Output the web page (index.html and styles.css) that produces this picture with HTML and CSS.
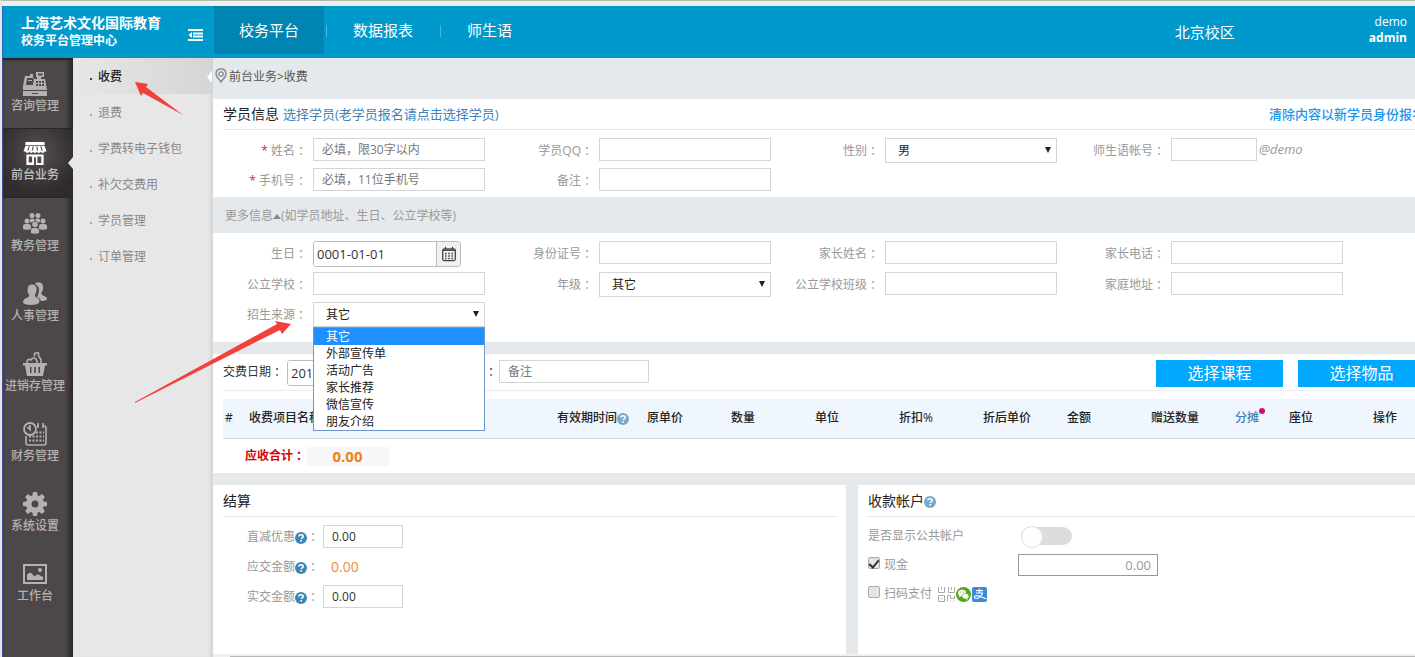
FILE: index.html
```html
<!DOCTYPE html>
<html lang="zh-CN">
<head>
<meta charset="utf-8">
<title>校务平台管理中心</title>
<link rel="stylesheet" href="styles.css">
</head>
<body>
<svg class="defs" aria-hidden="true">
  <symbol id="help" viewBox="0 0 12 12"><circle cx="6" cy="6" r="6" fill="currentColor"/><path d="M3.9 4.6C3.9 3.3 4.8 2.7 6 2.7s2.2.7 2.2 1.8c0 1.3-1.9 1.4-1.9 2.6" fill="none" stroke="#fff" stroke-width="1.6"/><rect x="5.3" y="8" width="1.7" height="1.6" fill="#fff"/></symbol>
  <symbol id="calendar" viewBox="0 0 16 16"><rect x="1.7" y="3" width="12.6" height="11.6" rx="1.5" fill="none" stroke="#444" stroke-width="1.3"/><path d="M2 4.500h12M4.500.8v3M11.500.8v3" stroke="#444" stroke-width="1.2"/><path d="M4 7.500h8M4 10h8M4 12.500h8" stroke="#444" stroke-width="1.4" stroke-dasharray="1.600 1.600"/></symbol>
</svg>
<div class="app">
  <header class="topbar">
    <div class="brand">
      <div class="brand-text"><h1>上海艺术文化国际教育</h1><p>校务平台管理中心</p></div>
      <button class="collapse" type="button" aria-label="收起菜单"><svg viewBox="0 0 15 12"><path d="M0 1h15M5 4.400h10M5 7.600h10M0 11h15" stroke="#fff" stroke-width="2"/><path d="M4 3v6L.5 6z" fill="#fff"/></svg></button>
    </div>
    <nav class="tabs">
      <a class="tab active" href="#">校务平台</a><a class="tab" href="#">数据报表</a><a class="tab" href="#">师生语</a>
    </nav>
    <a class="campus" href="#">北京校区</a>
    <div class="user"><span>demo</span><strong>admin</strong></div>
  </header>
  <div class="body">
    <nav class="sidebar">
      <a href="#"><svg viewBox="0 0 24 24"><path fill="currentColor" fill-rule="evenodd" d="M13 0h8v5h-3v2h4l2 11H0V14L2 4h5V2h3v5h4V5h-1zM15 1.500v2h4.500v-2zM4 6 3 13h7l1-7zM13 9v2h2V9zm3 0v2h2V9zm3 0v2h2V9zm-6 3v2h2v-2zm3 0v2h2v-2zm3 0v2h2v-2zM5 8h4v1H5zM0 19h24v5H0zm9 2v1h6v-1z"/></svg>咨询管理</a>
      <a class="active" href="#"><svg viewBox="0 0 24 24"><path fill="currentColor" fill-rule="evenodd" d="M2 0h20v3H2zM2 4h20l2 6h-2c-1 2-3 2-4 0-1 2-3 2-4 0-1 2-3 2-4 0-1 2-3 2-4 0-1 2-3 2-4 0H0zM3 13h18v11h-8v-8H11v8H3zm2.500 2v6.500H9V15zM14.500 15v7H18.500v-7z"/><path d="M6 4.500 4.500 9M10 4.500 9.500 9M14 4.500l.5 4.500M18 4.500 19.500 9" stroke="#353232"/></svg>前台业务</a>
      <a href="#"><svg viewBox="0 0 24 24" fill="currentColor"><circle cx="9" cy="3.500" r="2.500"/><circle cx="15" cy="3.500" r="2.500"/><circle cx="4" cy="9" r="2.500"/><circle cx="20" cy="9" r="2.500"/><circle cx="12" cy="12.500" r="2.800"/><path d="M7 10V8c0-2 4-2 4.500-.5V9L9 10.500zM17 10V8c0-2-4-2-4.500-.5V9l2.500 1.500zM0 17v-2.500C0 12 2 12 4 12s4 0 4 2.500V17c-2 1-6 1-8 0zM16 17v-2.500c0-2.500 2-2.500 4-2.500s4 0 4 2.500V17c-2 1-6 1-8 0zM8 21v-2.500C8 16 10 16 12 16s4 0 4 2.500V21c-2 1-6 1-8 0z"/></svg>教务管理</a>
      <a href="#"><svg viewBox="0 0 24 24" fill="currentColor"><path d="M9 2.500c3.500 0 5 2.500 4.500 6-.2 2-1 3-1.500 4-.3 2 .5 2.500 2.500 3.500 2 1 2.500 2.500 1.500 5C13 23.500 3 23.500 0 21c0-3 1-4 3.500-5s3-1.500 2.500-3.500c-1-1-1.500-2.500-1.500-4.500 0-3.500 1.500-5.500 4.500-5.500z"/><path d="M12 2c1-1.500 3-2 4.500-1.500C20 1 20.500 4 20 7c-.3 2-1 2.500-1.500 3.500s0 2.500 2.500 3.500c2.500.8 3 2 3 3.500-1 1.500-4 1.500-6 1.500-.5-2-2-3-4-4 1-2 2-4 2-7.500 0-2.500-1.500-4-4-5.500z"/></svg>人事管理</a>
      <a href="#"><svg viewBox="0 0 24 24"><path fill="none" stroke="currentColor" stroke-width="1.600" d="M11.500 1h4v3l2.500 3.500V12M11.500 1v3.500M4 12V9c1-2 3-2 4-1 1.500-3 5-2.500 6 1v3"/><path fill="currentColor" fill-rule="evenodd" d="M0 11h24v2.500h-2L20 24H4L2 13.500H0zM7 15v6h1.500v-6zm4.200 0v6h1.600v-6zm4.300 0v6H17v-6z"/></svg>进销存管理</a>
      <a href="#"><svg viewBox="0 0 24 24" fill="none" stroke="currentColor"><circle cx="7" cy="7" r="6" stroke-width="1.800"/><path stroke-width="1.600" d="M7 3v4.500L4.500 5M3 14v7c0 1.500.5 2 2 2h16c1.500 0 2-.5 2-2V6c0-1.500-.5-2-2-2h-1M14 4h2M15 1v5M20 1v5"/><path stroke-width="2" stroke-dasharray="2 1.500" d="M13 10.500h8M6 14.500h15M6 18.500h15"/></svg>财务管理</a>
      <a href="#"><svg viewBox="0 0 24 24"><g fill="currentColor"><path fill-rule="evenodd" d="M12 3a9 9 0 1 0 0 18 9 9 0 0 0 0-18zm0 5.500a3.500 3.500 0 1 1 0 7 3.500 3.500 0 0 1 0-7z"/><g id="cog"><path d="M10 0h4l.8 5H9.200zM10 24h4l.8-5H9.200zM0 10v4l5 .8V9.200zM24 10v4l-5 .8V9.200z"/></g><use href="#cog" transform="rotate(45 12 12)"/></g></svg>系统设置</a>
      <a href="#"><svg viewBox="0 0 24 24"><path fill="none" stroke="currentColor" stroke-width="2" d="M1 3h22v18H1z"/><path fill="currentColor" d="M4 18v-5c2-3 4-3 6 0l1.500 1.500c2-2 4-3 5.500-1 1 1 2 1 3 1V18z"/><circle cx="17" cy="8" r="2" fill="currentColor"/></svg>工作台</a>
    </nav>
    <nav class="subnav">
      <a class="active" href="#">收费</a><a href="#">退费</a><a href="#">学费转电子钱包</a><a href="#">补欠交费用</a><a href="#">学员管理</a><a href="#">订单管理</a>
    </nav>
    <main class="main">
      <div class="content">
        <div class="crumb"><svg viewBox="0 0 12 15"><path d="M6 1C3 1 1 3 1 6c0 3 3 5 5 8 2-3 5-5 5-8 0-3-2-5-5-5z" fill="none" stroke="#888b8e" stroke-width="1.500"/><circle cx="6" cy="6" r="2.200" fill="none" stroke="#888b8e" stroke-width="1.300"/></svg><span>前台业务&gt;收费</span></div>

        <section class="card">
          <div class="card-head"><h2>学员信息</h2><a class="pick" href="#">选择学员(老学员报名请点击选择学员)</a><a class="reset" href="#">清除内容以新学员身份报名</a></div>
          <div class="fields">
            <div class="field"><label for="name"><i>*</i> 姓名<span class="colon">：</span></label><input id="name" type="text" placeholder="必填，限30字以内"></div>
            <div class="field"><label for="qq">学员QQ<span class="colon">：</span></label><input id="qq" type="text"></div>
            <div class="field"><label for="sex">性别<span class="colon">：</span></label><div class="select"><select id="sex"><option>男</option><option>女</option></select></div></div>
            <div class="field"><label for="account">师生语帐号<span class="colon">：</span></label><input class="short" id="account" type="text"><em>@demo</em></div>
            <div class="field"><label for="phone"><i>*</i> 手机号<span class="colon">：</span></label><input id="phone" type="text" placeholder="必填，11位手机号"></div>
            <div class="field"><label for="note">备注<span class="colon">：</span></label><input id="note" type="text"></div>
          </div>
        </section>

        <div class="more">更多信息<span class="up"></span>(如学员地址、生日、公立学校等)</div>

        <section class="card extra">
          <div class="fields">
            <div class="field"><label for="birth">生日<span class="colon">：</span></label><div class="date"><input id="birth" type="text" value="0001-01-01"><button type="button" aria-label="选择日期"><svg><use href="#calendar"/></svg></button></div></div>
            <div class="field"><label for="idno">身份证号<span class="colon">：</span></label><input id="idno" type="text"></div>
            <div class="field"><label for="parent">家长姓名<span class="colon">：</span></label><input id="parent" type="text"></div>
            <div class="field"><label for="ptel">家长电话<span class="colon">：</span></label><input id="ptel" type="text"></div>
            <div class="field"><label for="school">公立学校<span class="colon">：</span></label><input id="school" type="text"></div>
            <div class="field"><label for="grade">年级<span class="colon">：</span></label><div class="select"><select id="grade"><option>其它</option></select></div></div>
            <div class="field"><label for="class">公立学校班级<span class="colon">：</span></label><input id="class" type="text"></div>
            <div class="field"><label for="addr">家庭地址<span class="colon">：</span></label><input id="addr" type="text"></div>
            <div class="field"><label for="source">招生来源<span class="colon">：</span></label><div class="select"><select id="source"><option>其它</option></select>
              <ul class="options"><li class="chosen">其它</li><li>外部宣传单</li><li>活动广告</li><li>家长推荐</li><li>微信宣传</li><li>朋友介绍</li></ul></div></div>
          </div>
        </section>

        <section class="card orders">
          <div class="paybar">
            <label for="paydate">交费日期<span class="colon">：</span></label><div class="date pay"><input id="paydate" type="text" value="2017-09-01"><button type="button" aria-label="选择交费日期"><svg><use href="#calendar"/></svg></button></div>
            <label for="paynote">备注<span class="colon">：</span></label><input class="paynote" id="paynote" type="text" placeholder="备注">
            <div class="actions"><button type="button">选择课程</button><button type="button">选择物品</button></div>
          </div>
          <table>
            <colgroup><col class="c-no"><col><col class="c-time"><col class="c-std"><col class="c-std"><col class="c-std"><col class="c-std"><col class="c-std"><col class="c-std"><col class="c-std"><col class="c-sm"><col class="c-std"><col class="c-sm"></colgroup>
            <thead><tr><th>#</th><th>收费项目名称</th><th>有效期时间<svg class="help pale"><use href="#help"/></svg></th><th>原单价</th><th>数量</th><th>单位</th><th>折扣%</th><th>折后单价</th><th>金额</th><th>赠送数量</th><th><a class="share" href="#">分摊</a></th><th>座位</th><th>操作</th></tr></thead>
          </table>
          <div class="total"><span>应收合计<span class="colon">：</span></span><output>0.00</output></div>
        </section>

        <div class="panels">
          <section class="panel settle">
            <div class="panel-head"><h2>结算</h2></div>
            <div class="line"><label for="cut">直减优惠<svg class="help"><use href="#help"/></svg><span class="colon">：</span></label><input id="cut" type="text" value="0.00"></div>
            <div class="line"><span class="label">应交金额<svg class="help"><use href="#help"/></svg><span class="colon">：</span></span><output>0.00</output></div>
            <div class="line"><label for="paid">实交金额<svg class="help"><use href="#help"/></svg><span class="colon">：</span></label><input id="paid" type="text" value="0.00"></div>
          </section>
          <section class="panel accounts">
            <div class="panel-head"><h2>收款帐户</h2><svg class="help pale"><use href="#help"/></svg></div>
            <div class="line"><label class="wide" for="public">是否显示公共帐户</label><input class="switch" id="public" type="checkbox" role="switch"></div>
            <div class="line"><div class="wide check"><input id="cash" type="checkbox" checked><label for="cash">现金</label></div><input class="amount" type="text" value="0.00" aria-label="现金金额"></div>
            <div class="line"><div class="check"><input id="scan" type="checkbox"><label for="scan">扫码支付</label></div>
              <div class="brands">
                <svg viewBox="0 0 17 15" class="qr"><path fill="none" stroke="#aaa" d="M.5 0v5.500h6V0M3.500 0v3M10.500 0v5.500h6V0M13.500 0v3M.5 14.500v-6h6v6zM3 11.500h1.500M9.500 14.500v-6h3v3h4v-3M12.500 14.500v-1M15.500 14.500v-1"/></svg>
                <svg viewBox="0 0 15 15"><circle cx="7.500" cy="7.500" r="7.500" fill="#51a80e"/><ellipse cx="6" cy="6" rx="4" ry="3.300" fill="#fff"/><path d="M3.500 8 3 10.500l2.500-1.500z" fill="#fff"/><ellipse cx="9.500" cy="9.200" rx="3.500" ry="2.800" fill="#fff" stroke="#51a80e" stroke-width=".6"/><path d="m11 11 1 2-2.500-1.300z" fill="#fff"/><circle cx="4.700" cy="5" r=".6" fill="#51a80e"/><circle cx="7.300" cy="5" r=".6" fill="#51a80e"/></svg>
                <svg viewBox="0 0 15 15"><rect width="15" height="15" rx="2" fill="#3a8bd8"/><path d="M4 3.700h7M7.500 1.800v4M4 6h6.500C10 8.500 7 11.500 4.500 11.500S1.500 9.500 3.500 8.800c2.500-.8 5 1.200 11 3.200" fill="none" stroke="#fff" stroke-width="1.200"/></svg>
              </div></div>
          </section>
        </div>
      </div>
      <div class="hscroll"><div></div></div>
    </main>
  </div>
  <svg class="notes" viewBox="0 0 320 420" aria-hidden="true"><path fill="#f2413b" d="M135 82l13 2-2 3 37 28-40-22-2 3zM291 324l-9 10-2-4-145 73v-1l142-78-2-3z"/></svg>
</div>
</body>
</html>
```
FILE: styles.css
```css
* { box-sizing: border-box; }
body { margin: 0; font: 12px/18px "Open Sans", "Noto Sans CJK SC", sans-serif; color: #333; background: #f0eff0; }
h1, h2, p, ul { margin: 0; padding: 0; }
h2 { font-size: 14px; font-weight: 400; color: #222; }
a { text-decoration: none; color: #4183b8; }
i, em { font-weight: 400; }
button, input, select { font: inherit; color: inherit; margin: 0; }
svg { display: block; }
.defs { position: absolute; width: 0; height: 0; }
.colon { padding-left: 3px; margin-right: -3px; }

.app { position: relative; display: flex; flex-direction: column; min-height: 100vh; border-top: 1px solid #b3bab3; border-left: 2px solid #e3e8e3; padding-top: 5px; overflow: hidden; }

.topbar { display: flex; height: 52px; flex: none; background: #09c; color: #fff; border-left: 1px solid #1c6dc0; }
.brand { display: flex; width: 211px; align-items: center; justify-content: space-between; padding: 0 11px 0 18px; }
.brand-text { line-height: 18px; }
.brand h1 { font-size: 14px; line-height: 18px; }
.brand p { font-weight: 700; }
.collapse { border: 0; padding: 6px 0 0; background: none; }
.collapse svg { width: 15px; height: 12px; }
.tabs { display: flex; flex: 1; gap: 4px; }
.tab { position: relative; height: 48px; padding: 0 25px; font-size: 15px; line-height: 49px; color: #fff; }
.tab.active { background: #0085b2; }
.tab + .tab::before { content: ""; position: absolute; left: -2px; top: 19px; width: 1px; height: 12px; background: #4db8dc; }
.campus { padding: 0 134px 0 0; font-size: 15px; line-height: 52px; color: #fff; }
.user { display: flex; flex-direction: column; padding: 8px 8px 0 0; font-size: 12px; line-height: 16px; text-align: right; }

.body { display: flex; flex: 1; border-left: 1px solid #4a4c9c; }
.sidebar { width: 70px; flex: none; background: linear-gradient(90deg, #4c4748 62px, #2d2a2b 70px); box-shadow: inset 0 2px 2px #222; }
.sidebar a { position: relative; display: flex; flex-direction: column; align-items: center; gap: 3px; padding: 14px 6px 15px 0; height: 70px; font-weight: 500; line-height: 14px; color: #b4b1b1; white-space: nowrap; }
.sidebar svg { width: 24px; height: 24px; }
.sidebar .active { background: radial-gradient(circle at 50% 35%, #555051, #2f2b2c 75%); border-top: 1px solid #292627; border-bottom: 1px solid #292627; padding-top: 13px; color: #c4c2c2; }
.sidebar .active svg { color: #fff; }
.sidebar .active::after, .subnav .active::after { content: ""; position: absolute; right: 0; top: 28px; border: 6px solid transparent; border-left: 0; border-right: 5px solid #e8e7e8; }
.subnav { width: 140px; flex: none; background: #e8e7e8; border-right: 1px solid #d3d5d7; box-shadow: inset -4px 0 4px -3px #cfcfcf; }
.subnav a { position: relative; display: block; padding: 2px 0 0 25px; line-height: 34px; color: #888; }
.subnav a::before { content: ""; position: absolute; left: 17px; top: 20px; width: 2px; height: 2px; background: #aaa; }
.subnav .active { color: #222; font-weight: 500; background: linear-gradient(90deg, #e8e7e8, #d5d5d6); }
.subnav .active::before { background: #444; }
.subnav .active::after { top: 13px; border-right-color: #fff; }

.main { display: flex; flex: 1; flex-direction: column; min-width: 0; background: #e5e9ec; overflow: hidden; }
.content { display: flex; flex: 1; flex-direction: column; min-width: 1222px; }
.crumb { display: flex; height: 41px; gap: 2px; padding: 10px 0 0 2px; color: #555; }
.crumb svg { width: 12px; height: 15px; }

.card { background: #fff; padding: 0 10px; }
.card-head { display: flex; align-items: center; gap: 4px; height: 31px; border-bottom: 1px solid #e8e8e8; }
.pick, .reset { font-size: 13px; }
.reset { margin-left: auto; font-weight: 500; color: #1b96ea; }
.fields { display: grid; grid-template-columns: repeat(4, 286px); gap: 5px 0; padding: 8px 0 4px; }
.field { display: flex; align-items: flex-start; color: #999; }
.field > label { width: 84px; margin-right: 6px; text-align: right; line-height: 25px; white-space: nowrap; }
.field i { color: #e0203a; font-style: normal; }
.field em { font-size: 13px; line-height: 23px; padding-left: 2px; }
input[type="text"] { width: 172px; height: 23px; padding: 0 12px 0 8px; border: 1px solid #d5d5d5; border-radius: 0; background: #fff; color: #333; outline: 0; }
.field input[type="text"]::placeholder, .paynote::placeholder { color: #777; opacity: 1; }
.field input.short { width: 86px; }
.select { position: relative; width: 172px; }
.select select { display: block; width: 100%; height: 25px; padding: 1px 12px 0; border: 1px solid #d5d5d5; border-radius: 0; background: #fff; color: #222; appearance: none; }
.select::after { content: ""; position: absolute; right: 6px; top: 9px; border: 3px solid transparent; border-top: 6px solid #222; border-bottom: 0; }
.date { display: flex; width: 148px; height: 26px; border: 1px solid #bbb; border-radius: 3px; background: #fff; overflow: hidden; }
.date input[type="text"] { flex: 1; min-width: 0; height: 24px; padding: 0 3px; border: 0; font-size: 13px; }
.date button { display: flex; width: 24px; align-items: center; justify-content: center; padding: 0; border: 0; border-left: 1px solid #bbb; background: #f1f1f1; }
.date svg { width: 16px; height: 16px; }
.options { position: absolute; z-index: 2; left: 0; right: 0; top: 25px; border: 1px solid #6f95cb; background: #fff; color: #222; list-style: none; }
.options li { padding-left: 12px; line-height: 17px; }
.options .chosen { background: #1e90ff; color: #fff; }

.more { height: 36px; padding-left: 12px; line-height: 37px; color: #999; }
.up { display: inline-block; border: 4px solid transparent; border-top: 0; border-bottom: 5px solid #888; margin-bottom: 1px; }
.extra { padding-bottom: 11px; margin-bottom: 12px; }

.orders { height: 119px; }
.paybar { display: flex; align-items: flex-start; height: 37px; padding-top: 6px; border-bottom: 1px solid #ececec; line-height: 24px; }
.paybar label { width: 64px; white-space: nowrap; }
.date.pay { width: 148px; margin-right: 26px; }
.paybar .date + label { width: 38px; }
.paybar .paynote { width: 150px; }
.actions { display: flex; gap: 15px; margin-left: auto; }
.actions button { width: 127px; height: 27px; padding: 0; border: 0; background: #00a8ff; color: #fff; font-size: 16px; line-height: 27px; }
table { width: 100%; margin-top: 8px; border-collapse: collapse; table-layout: fixed; }
th { height: 39px; padding: 0 2px; background: #eff6fe; border-bottom: 1px solid #c9dbe5; text-align: left; font-weight: 500; color: #222; white-space: nowrap; }
.c-no { width: 24px; }
.c-time { width: 90px; }
.c-std { width: 84px; }
.c-sm { width: 54px; }
.help { display: inline-block; width: 12px; height: 12px; vertical-align: -3px; color: #3a87b7; }
.help.pale { color: #77a9cb; }
.share { position: relative; }
.share::after { content: ""; position: absolute; right: -6px; top: -1px; width: 6px; height: 6px; border-radius: 50%; background: #d4106d; }
.total { display: flex; align-items: center; padding: 8px 0 0 22px; color: #d60000; font-weight: 700; white-space: nowrap; }
.total > span { width: 61px; }
.total output { width: 83px; background: #f7f7f9; color: #f0820f; font-size: 15px; line-height: 19px; text-align: center; }

.panels { display: flex; flex: 1; gap: 12px; padding-top: 12px; }
.panel { flex: 576 1 0; padding: 0 10px; background: #fff; }
.settle { flex-grow: 634; }
.panel-head { display: flex; align-items: center; height: 32px; margin-bottom: 8px; border-bottom: 1px solid #e8e8e8; }
.panel-head .help { margin-top: 2px; }
.line { display: flex; align-items: center; height: 23px; margin-bottom: 7px; color: #999; }
.settle label, .settle .label { width: 76px; margin-left: 24px; white-space: nowrap; }
.settle .line input[type="text"] { width: 80px; }
.settle output { padding-left: 8px; color: #f0903a; font-size: 14px; }
.accounts .line { height: 22px; }
.wide { width: 150px; }
.check { display: flex; align-items: center; gap: 4px; }
.check input { width: 12px; height: 12px; appearance: none; border: 1px solid #aaa; border-radius: 2px; background: #e4e4e4; display: grid; place-items: center; margin-bottom: 4px; }
.check input:checked::after { content: ""; width: 8px; height: 4px; border: solid #333; border-width: 0 0 2px 2px; transform: rotate(-50deg); }
.switch { position: relative; width: 51px; height: 18px; margin-left: 3px; border-radius: 9px; background: #ddd; appearance: none; }
.switch::after { content: ""; position: absolute; left: 0; top: -1px; width: 20px; height: 20px; border: 1px solid #ddd; border-radius: 50%; background: #fff; }
.line input.amount { width: 140px; height: 22px; padding: 0 6px; border-color: #999; color: #999; text-align: right; font-size: 13px; }
.brands { display: flex; gap: 1px; margin-left: 6px; }
.brands svg { width: 15px; height: 15px; }
.brands .qr { width: 17px; }
.hscroll { height: 3px; flex: none; padding: 2px 0 0 17px; background: #f0f0f0; }
.hscroll div { height: 1px; background: #b8b8b8; }
.notes { position: absolute; left: -2px; top: -1px; width: 320px; height: 420px; pointer-events: none; }
```
